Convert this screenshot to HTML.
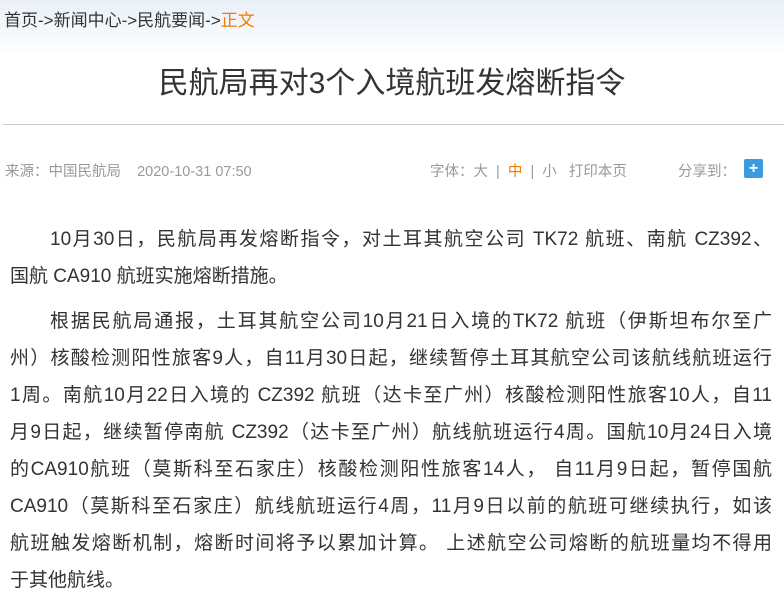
<!DOCTYPE html>
<html><head><meta charset="utf-8"><style>
body{margin:0;width:784px;height:614px;overflow:hidden;background:#fff;font-family:"Liberation Sans","Noto Sans CJK SC",sans-serif;}
.top{position:absolute;left:0;top:0;width:784px;height:60px;background:linear-gradient(#eaf0f8,#fff);}
.crumb{position:absolute;left:4px;top:6px;font-size:17px;color:#333;}
.crumb span{color:#f47a00}
h1{position:absolute;left:0;top:58px;width:784px;margin:0;text-align:center;font-weight:normal;font-size:30px;color:#333;}
.hr{position:absolute;left:3px;top:124px;width:781px;height:1px;background:#ccc;}
.meta{position:absolute;top:160px;font-size:14.5px;color:#999;}
.plus{position:absolute;left:744px;top:159px;width:19px;height:19px;background:#3a9be0;border-radius:2px;color:#fff;font-size:16px;line-height:19px;text-align:center;font-weight:bold;}
.body{position:absolute;left:10px;top:221px;width:762px;font-size:19px;line-height:37px;color:#333;}
.body p{margin:0 0 8px;}
.body p span{display:block;white-space:nowrap;text-align:justify;text-align-last:justify;}
.body p span.l{text-align-last:left;}
</style></head><body>
<div class="top"></div>
<div class="crumb">首页-&gt;新闻中心-&gt;民航要闻-&gt;<span>正文</span></div>
<h1>民航局再对3个入境航班发熔断指令</h1>
<div class="hr"></div>
<div class="meta" style="left:5px">来源：中国民航局 &nbsp;&nbsp; 2020-10-31 07:50</div>
<div class="meta" style="left:430px">字体：大 &nbsp;| &nbsp;<span style="color:#f47a00">中</span> &nbsp;| &nbsp;小 &nbsp;&nbsp;打印本页</div>
<div class="meta" style="left:678px">分享到：</div>
<div class="plus">+</div>
<div class="body">
<p><span style="padding-left:40px">10月30日，民航局再发熔断指令，对土耳其航空公司 TK72 航班、南航 CZ392、</span><span class="l">国航 CA910 航班实施熔断措施。</span></p>
<p><span style="padding-left:40px">根据民航局通报，土耳其航空公司10月21日入境的TK72 航班（伊斯坦布尔至广</span><span>州）核酸检测阳性旅客9人，自11月30日起，继续暂停土耳其航空公司该航线航班运行</span><span>1周。南航10月22日入境的 CZ392 航班（达卡至广州）核酸检测阳性旅客10人，自11</span><span>月9日起，继续暂停南航 CZ392（达卡至广州）航线航班运行4周。国航10月24日入境</span><span>的CA910航班（莫斯科至石家庄）核酸检测阳性旅客14人， 自11月9日起，暂停国航</span><span>CA910（莫斯科至石家庄）航线航班运行4周，11月9日以前的航班可继续执行，如该</span><span>航班触发熔断机制，熔断时间将予以累加计算。 上述航空公司熔断的航班量均不得用</span><span class="l">于其他航线。</span></p>
</div>
</body></html>
